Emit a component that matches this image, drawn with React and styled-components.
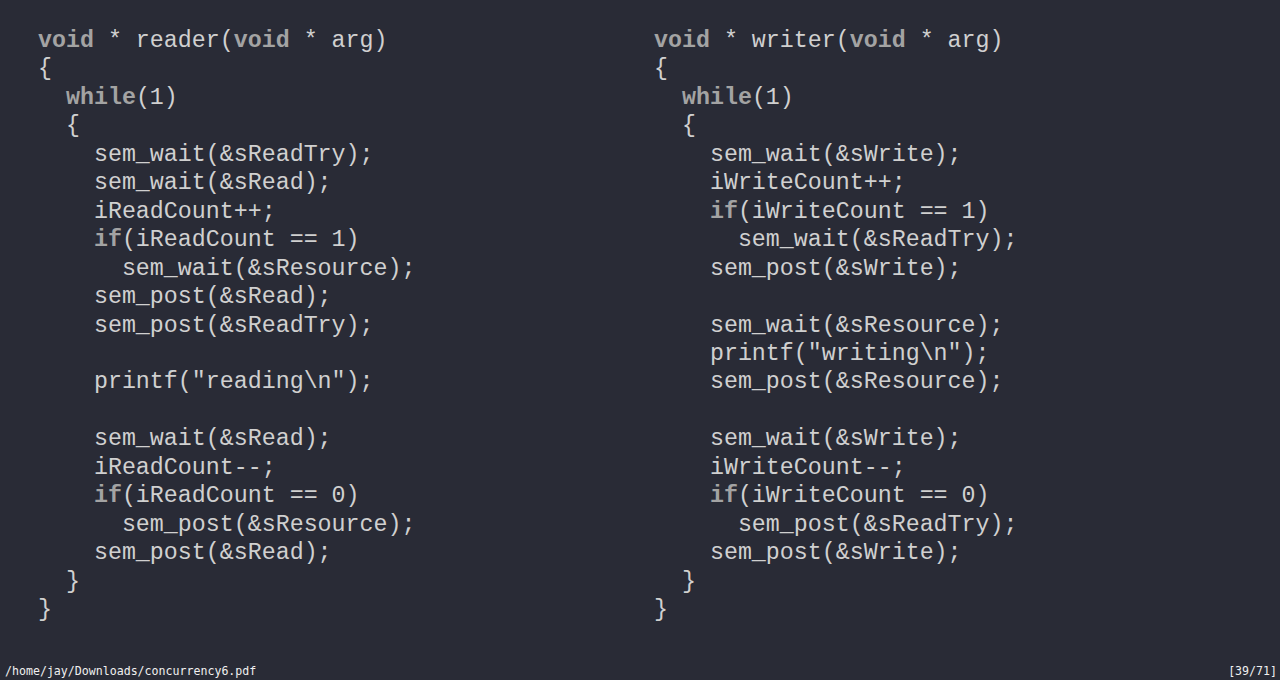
import React from "react";
import styled, { createGlobalStyle } from "styled-components";

const GlobalStyle = createGlobalStyle`
  html, body {
    margin: 0;
    padding: 0;
    background: #292b36;
  }
`;

const Page = styled.div`
  width: 1280px;
  height: 680px;
  display: flex;
  flex-direction: column;
  background: #292b36;
  overflow: hidden;
`;

const Slide = styled.div`
  flex: 1;
  display: grid;
  grid-template-columns: 616px 1fr;
  padding: 27px 0 0 38px;
`;

const Code = styled.pre`
  margin: 0;
  font-family: "Liberation Mono", "Courier New", monospace;
  font-size: 23.3px;
  line-height: 28.45px;
  color: #d0d0d0;
  white-space: pre;
`;

const Kw = styled.b`
  font-weight: bold;
  color: #a3a3a3;
`;

const StatusBar = styled.div`
  height: 22px;
  box-sizing: border-box;
  display: flex;
  align-items: center;
  justify-content: space-between;
  padding: 4px 3px 0 5px;
  font-family: "DejaVu Sans Mono", monospace;
  font-size: 11.6px;
  color: #f0f0f0;
`;

const reader = [
  [["k", "void"], " * reader(", ["k", "void"], " * arg)"],
  ["{"],
  ["  ", ["k", "while"], "(1)"],
  ["  {"],
  ["    sem_wait(&sReadTry);"],
  ["    sem_wait(&sRead);"],
  ["    iReadCount++;"],
  ["    ", ["k", "if"], "(iReadCount == 1)"],
  ["      sem_wait(&sResource);"],
  ["    sem_post(&sRead);"],
  ["    sem_post(&sReadTry);"],
  [""],
  ["    printf(\"reading\\n\");"],
  [""],
  ["    sem_wait(&sRead);"],
  ["    iReadCount--;"],
  ["    ", ["k", "if"], "(iReadCount == 0)"],
  ["      sem_post(&sResource);"],
  ["    sem_post(&sRead);"],
  ["  }"],
  ["}"],
];

const writer = [
  [["k", "void"], " * writer(", ["k", "void"], " * arg)"],
  ["{"],
  ["  ", ["k", "while"], "(1)"],
  ["  {"],
  ["    sem_wait(&sWrite);"],
  ["    iWriteCount++;"],
  ["    ", ["k", "if"], "(iWriteCount == 1)"],
  ["      sem_wait(&sReadTry);"],
  ["    sem_post(&sWrite);"],
  [""],
  ["    sem_wait(&sResource);"],
  ["    printf(\"writing\\n\");"],
  ["    sem_post(&sResource);"],
  [""],
  ["    sem_wait(&sWrite);"],
  ["    iWriteCount--;"],
  ["    ", ["k", "if"], "(iWriteCount == 0)"],
  ["      sem_post(&sReadTry);"],
  ["    sem_post(&sWrite);"],
  ["  }"],
  ["}"],
];

const renderLines = (lines) =>
  lines.map((parts, i) => (
    <React.Fragment key={i}>
      {parts.map((p, j) =>
        Array.isArray(p) ? <Kw key={j}>{p[1]}</Kw> : <React.Fragment key={j}>{p}</React.Fragment>
      )}
      {"\n"}
    </React.Fragment>
  ));

const App = () => {
  return (
    <Page>
      <GlobalStyle />
      <Slide>
        <Code>{renderLines(reader)}</Code>
        <Code>{renderLines(writer)}</Code>
      </Slide>
      <StatusBar>
        <span>/home/jay/Downloads/concurrency6.pdf</span>
        <span>[39/71]</span>
      </StatusBar>
    </Page>
  );
};

export default App;
